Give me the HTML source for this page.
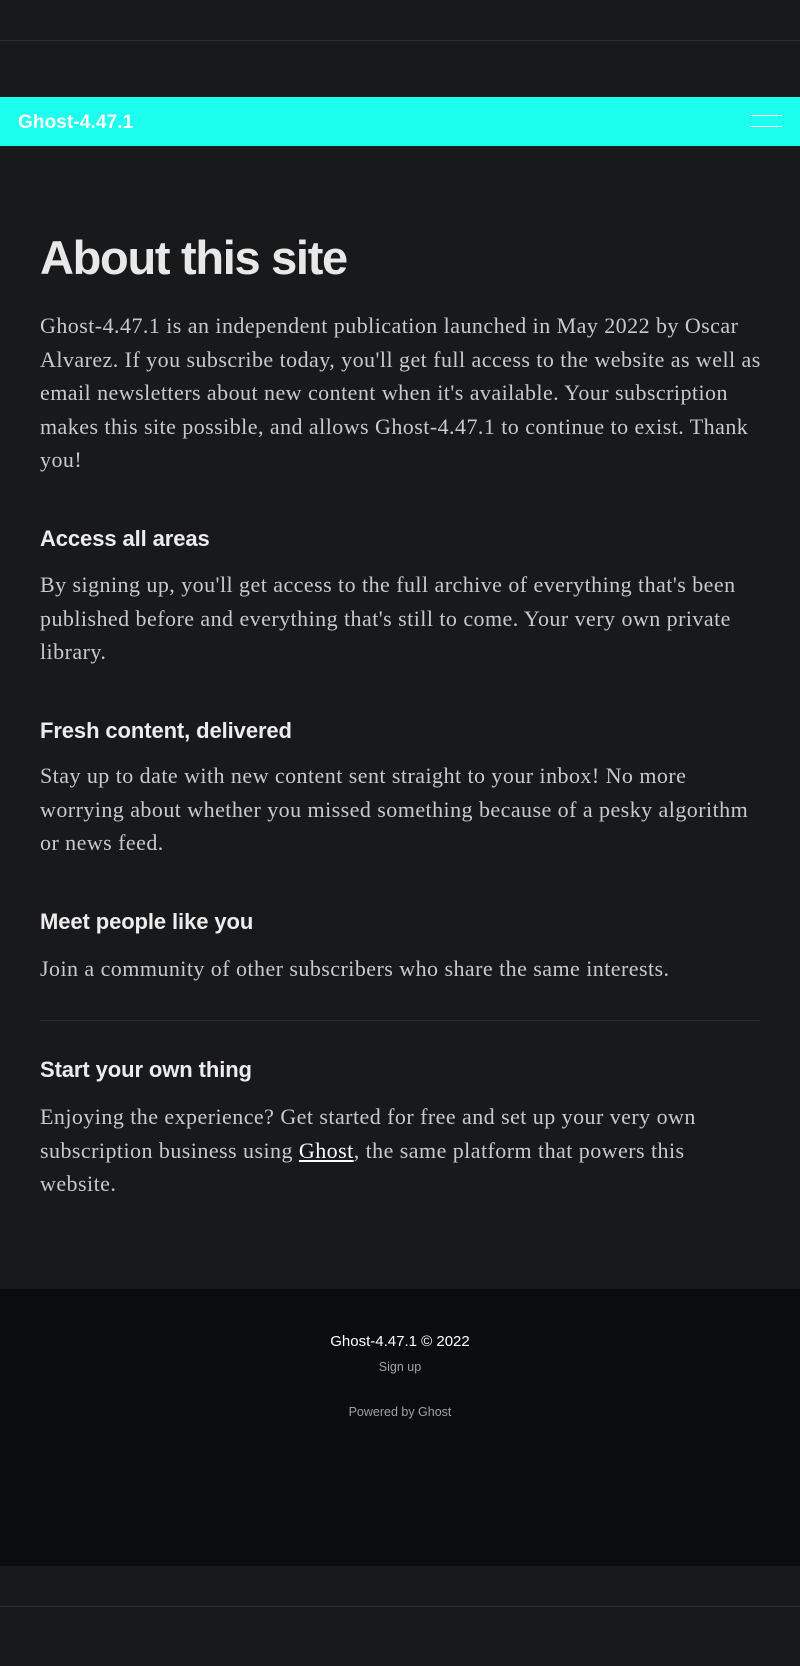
<!DOCTYPE html>
<html><head><meta charset="utf-8"><style>
*{margin:0;padding:0;box-sizing:border-box}
html,body{width:800px;height:1666px;background:#18191b;overflow:hidden}
body{position:relative;font-family:"Liberation Sans",sans-serif}
.line{position:absolute;left:0;width:800px;height:1px;background:#2c2d30}
.bar{position:absolute;left:0;top:97px;width:800px;height:49px;background:#1cffef}
.logo{position:absolute;left:18px;top:112px;color:#fff;font-weight:bold;font-size:19px;letter-spacing:0.1px}
.hb{position:absolute;left:750px;width:32px;height:1px;background:#fff}
h1{position:absolute;left:40px;top:226px;font-size:47px;font-weight:bold;color:#e8e8e8;letter-spacing:-1.3px;line-height:64px}
.p{position:absolute;left:40px;font-family:"Liberation Serif",serif;font-size:22px;line-height:33.5px;color:#c9c9c9;white-space:nowrap;letter-spacing:0.45px}
h3{position:absolute;left:40px;font-size:22px;font-weight:bold;color:#ececec;letter-spacing:-0.1px;line-height:30px}
a{color:#fff;text-decoration:underline}
.foot{position:absolute;left:0;top:1289px;width:800px;height:277px;background:#0b0c0e}
.c{position:absolute;left:0;width:800px;text-align:center}
</style></head><body>
<div class="line" style="top:40px"></div>
<div class="bar"></div>
<div class="logo">Ghost-4.47.1</div>
<div class="hb" style="top:115px"></div>
<div class="hb" style="top:126px"></div>
<h1>About this site</h1>
<div class="p" style="top:309px">Ghost-4.47.1 is an independent publication launched in May 2022 by Oscar<br>Alvarez. If you subscribe today, you'll get full access to the website as well as<br>email newsletters about new content when it's available. Your subscription<br>makes this site possible, and allows Ghost-4.47.1 to continue to exist. Thank<br>you!</div>
<h3 style="top:524px">Access all areas</h3>
<div class="p" style="top:568px">By signing up, you'll get access to the full archive of everything that's been<br>published before and everything that's still to come. Your very own private<br>library.</div>
<h3 style="top:716px">Fresh content, delivered</h3>
<div class="p" style="top:759px">Stay up to date with new content sent straight to your inbox! No more<br>worrying about whether you missed something because of a pesky algorithm<br>or news feed.</div>
<h3 style="top:907px">Meet people like you</h3>
<div class="p" style="top:952px">Join a community of other subscribers who share the same interests.</div>
<div class="line" style="top:1020px;left:40px;width:720px"></div>
<h3 style="top:1055px">Start your own thing</h3>
<div class="p" style="top:1100px">Enjoying the experience? Get started for free and set up your very own<br>subscription business using <a>Ghost</a>, the same platform that powers this<br>website.</div>
<div class="foot"></div>
<div class="c" style="top:1333px;font-size:15px;color:#fff">Ghost-4.47.1 © 2022</div>
<div class="c" style="top:1360px;font-size:12.5px;color:#a0a0a0">Sign up</div>
<div class="c" style="top:1405px;font-size:12.5px;color:#a0a0a0">Powered by Ghost</div>
<div class="line" style="top:1606px"></div>
</body></html>
